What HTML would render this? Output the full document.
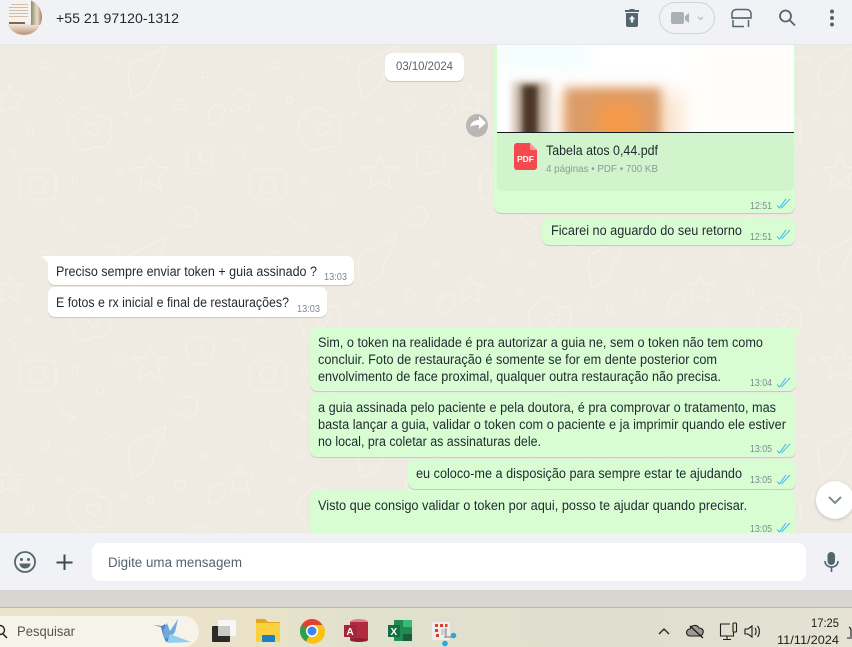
<!DOCTYPE html>
<html><head><meta charset="utf-8"><style>
*{box-sizing:border-box}
html,body{margin:0;padding:0;width:852px;height:647px;overflow:hidden;background:#efeae2;font-family:"Liberation Sans",sans-serif}
.a{position:absolute}
.b{position:absolute;border-radius:7px;box-shadow:0 1px .5px rgba(11,20,26,.16)}
.o{background:#d9fdd3}.i{background:#fff}
</style></head><body>
<svg class="a" style="left:0;top:45px" width="852" height="490">
<defs><pattern id="p" width="230" height="190" patternUnits="userSpaceOnUse">
<g fill="none" stroke="#f4f1eb" stroke-width="1.1">
<path d="M10 40l4 9 10 1-7 7 2 10-9-5-9 5 2-10-7-7 10-1z"/><circle cx="45" cy="20" r="4"/><circle cx="60" cy="55" r="3"/><circle cx="30" cy="85" r="3"/><circle cx="72" cy="30" r="2.500"/>
<path d="M75 70c8-12 22-8 24 2 8-3 16 6 10 14 6 10-6 20-14 15-8 8-22 3-22-7-8-6-6-20 2-24z"/><path d="M88 86c-5-6 2-10 5-5 4-5 10 0 5 5l-5 6z"/>
<path d="M130 20c14-8 30-14 36-20-2 10-6 20-12 28 0 10-10 22-22 24-2-10-6-20-2-32z"/><circle cx="150" cy="75" r="3"/><circle cx="180" cy="60" r="5"/><circle cx="125" cy="70" r="2.500"/><circle cx="205" cy="30" r="3"/>
<path d="M150 110l5 12 13 1-10 8 3 13-11-7-11 7 3-13-10-8 13-1z"/><circle cx="200" cy="115" r="14"/><path d="M200 105v10l6 4"/>
<rect x="20" y="125" width="36" height="30" rx="6"/><circle cx="38" cy="140" r="8"/><circle cx="75" cy="135" r="3"/><circle cx="100" cy="155" r="4"/><circle cx="120" cy="125" r="2.500"/>
<path d="M60 170l6 10 10 2-8 7M180 165c10-8 22 0 16 12-8 8-20 4-22-3M215 60c8-4 12 4 8 12l-10 8c-8-4-6-16 2-20z"/><path d="M5 105c8-2 12 6 8 12M105 15c4-6 14-6 14 2"/>
</g></pattern></defs>
<rect width="852" height="490" fill="#efeae2"/><rect width="852" height="490" fill="url(#p)"/>
</svg>

<div class="b o" style="left:494px;top:30px;width:301px;height:183px"></div>
<div class="a" style="left:497px;top:30px;width:297px;height:102px;background:#fff;overflow:hidden">
<div class="a" style="left:0;top:10px;width:90px;height:30px;background:#f2fdfc;filter:blur(10px)"></div>
<div class="a" style="left:200px;top:15px;width:97px;height:87px;background:#fffdf9;filter:blur(10px)"></div>
<div class="a" style="left:60px;top:62px;width:125px;height:60px;background:#fbe3cc;filter:blur(10px)"></div>
<div class="a" style="left:16px;top:52px;width:36px;height:70px;background:#c9b8a8;filter:blur(4px)"></div>
<div class="a" style="left:25px;top:55px;width:16px;height:70px;background:#4c3727;filter:blur(3px)"></div>
<div class="a" style="left:68px;top:58px;width:96px;height:70px;background:#dc9c68;filter:blur(5px)"></div>
<div class="a" style="left:100px;top:72px;width:44px;height:44px;background:#f69a48;filter:blur(9px)"></div>
</div>
<div class="a" style="left:497px;top:132px;width:297px;height:1px;background:#111b21"></div>
<div class="a" style="left:497px;top:133px;width:297px;height:58px;background:#d1f4cc;border-radius:0 0 6px 6px"></div>

<div class="a" style="left:0;top:0;width:852px;height:45px;background:#f0f2f5;border-bottom:1px solid #e6e7e9"></div>
<div class="a" style="left:6px;top:-1px;width:36px;height:36px;border-radius:50%;overflow:hidden;background:linear-gradient(180deg,#f5f3ef 0,#f5f3ef 66%,#dcc0aa 84%,#b98f75 100%)">
<div class="a" style="left:25px;top:0;width:11px;height:26px;background:linear-gradient(90deg,#8b8a6e,#e8dccb 55%,#a87c60)"></div>
<div class="a" style="left:3px;top:5px;width:19px;height:13px;background:repeating-linear-gradient(180deg,#d3bba6 0,#d3bba6 1px,#f5f3ef 1px,#f5f3ef 3px)"></div>
<div class="a" style="left:3px;top:23px;width:16px;height:1.500px;background:#7a675a"></div>
</div>

<div class="b o" style="left:542px;top:217px;width:253px;height:28px"></div>
<div class="b i" style="left:385px;top:53px;width:79px;height:28px"></div>
<div class="a" style="left:466px;top:114px;width:22px;height:23px;border-radius:50%;background:#b9b7b3"></div>

<div class="b i" style="left:48px;top:256px;width:306px;height:29px;border-top-left-radius:0"></div>
<div class="b i" style="left:48px;top:287px;width:279px;height:30px"></div>

<div class="b o" style="left:310px;top:328px;width:486px;height:63px;border-top-right-radius:0"></div>
<div class="b o" style="left:310px;top:394px;width:486px;height:63px"></div>
<div class="b o" style="left:408px;top:460px;width:388px;height:29px"></div>
<div class="b o" style="left:310px;top:490px;width:486px;height:60px"></div>

<div class="a" style="left:816px;top:481px;width:38px;height:38px;border-radius:50%;background:#fff;box-shadow:0 1px 3px rgba(11,20,26,.2)"></div>

<div class="a" style="left:0;top:533px;width:852px;height:57px;background:#f0f2f5"></div>
<div class="a" style="left:92px;top:543px;width:714px;height:38px;border-radius:8px;background:#fff"></div>
<div class="a" style="left:0;top:590px;width:852px;height:17px;background:#d9d6d1"></div>
<div class="a" style="left:0;top:607px;width:852px;height:1px;background:#b9b6ab"></div>
<div class="a" style="left:0;top:608px;width:852px;height:39px;background:linear-gradient(90deg,#ebe3ca 0,#e9e2c9 30%,#e0e0cf 45%,#dfdfcf 75%,#e5e2d3 100%)"></div>
<div class="a" style="left:-20px;top:616px;width:219px;height:31px;border-radius:16px;background:#f6f3ea"></div>

<svg class="a" style="left:0;top:0" width="852" height="647" font-family="Liberation Sans, sans-serif">
<defs>
<path id="tk" d="M0 7.500l2.500 2.500L9 1M4.500 10L13 1" fill="none" stroke="#53bdeb" stroke-width="1.100"/>
</defs>
<path d="M48 256h-6l6 7z" fill="#fff"/>
<path d="M796 328h6l-6 7z" fill="#d9fdd3"/>

<text x="56" y="23" font-size="14" fill="#1f2a30" textLength="123" lengthAdjust="spacingAndGlyphs">+55 21 97120-1312</text>

<g fill="#54656f">
<path d="M625 10h4l1-1h4l1 1h4v2h-14zM626 13h12v12a2 2 0 0 1-2 2h-8a2 2 0 0 1-2-2z"/>
<path d="M632 15.500l3.200 3.800h-2v3.200h-2.400v-3.200h-2z" fill="#f0f2f5"/>
</g>
<rect x="659.500" y="2.500" width="55" height="31" rx="15.500" fill="none" stroke="#d1d5d8"/>
<g fill="#a9b1b7"><rect x="671" y="12" width="13" height="12" rx="2"/><path d="M685 16l4-3v10l-4-3z"/></g>
<path d="M698 17l2.500 2.500L703 17" fill="none" stroke="#a9b1b7" stroke-width="1"/>
<g fill="none" stroke="#54656f" stroke-width="1.500">
<path d="M732 18v-4c0-3 2-4.500 4-4.500h11c2 0 4 1.500 4 4.500v4z"/><path d="M732 18h19" stroke-dasharray="2 1"/><path d="M733 20v6.500h11M748.500 20v7"/>
<circle cx="785.500" cy="16" r="5.500" stroke-width="1.800"/><path d="M789.500 20l5.500 5.500" stroke-width="1.800"/>
</g>
<g fill="#54656f"><circle cx="832" cy="11.500" r="2"/><circle cx="832" cy="18" r="2"/><circle cx="832" cy="24.500" r="2"/></g>

<text x="396" y="70" font-size="11.500" fill="#54656f" textLength="57" lengthAdjust="spacingAndGlyphs">03/10/2024</text>
<path d="M470 127c1-5 5-7 9-7v-4l7 7-7 6v-4c-4 0-7 .5-9 2z" fill="#fff"/>

<path d="M514 146a3 3 0 0 1 3-3h13l7 7v17a3 3 0 0 1-3 3h-17a3 3 0 0 1-3-3z" fill="#f5484f"/>
<path d="M530 143l7 7h-5a2 2 0 0 1-2-2z" fill="#f99"/>
<text x="517" y="162" font-size="8" font-weight="bold" fill="#fff" textLength="17" lengthAdjust="spacingAndGlyphs">PDF</text>
<text x="546" y="155" font-size="13.500" fill="#1f2a30" textLength="112" lengthAdjust="spacingAndGlyphs">Tabela atos 0,44.pdf</text>
<text x="546" y="172" font-size="10.500" fill="#8b9a9c" textLength="112" lengthAdjust="spacingAndGlyphs">4 páginas • PDF • 700 KB</text>

<g font-size="13.500" fill="#1f2a30">
<text x="551" y="235" textLength="191" lengthAdjust="spacingAndGlyphs">Ficarei no aguardo do seu retorno</text>
<text x="56" y="276" textLength="261" lengthAdjust="spacingAndGlyphs">Preciso sempre enviar token + guia assinado ?</text>
<text x="56" y="307" textLength="233" lengthAdjust="spacingAndGlyphs">E fotos e rx inicial e final de restaurações?</text>
<text x="318" y="347" textLength="445" lengthAdjust="spacingAndGlyphs">Sim, o token na realidade é pra autorizar a guia ne, sem o token não tem como</text>
<text x="318" y="364" textLength="399" lengthAdjust="spacingAndGlyphs">concluir. Foto de restauração é somente se for em dente posterior com</text>
<text x="318" y="381" textLength="403" lengthAdjust="spacingAndGlyphs">envolvimento de face proximal, qualquer outra restauração não precisa.</text>
<text x="318" y="412" textLength="458" lengthAdjust="spacingAndGlyphs">a guia assinada pelo paciente e pela doutora, é pra comprovar o tratamento, mas</text>
<text x="318" y="429" textLength="468" lengthAdjust="spacingAndGlyphs">basta lançar a guia, validar o token com o paciente e ja imprimir quando ele estiver</text>
<text x="318" y="446" textLength="223" lengthAdjust="spacingAndGlyphs">no local, pra coletar as assinaturas dele.</text>
<text x="416" y="478" textLength="326" lengthAdjust="spacingAndGlyphs">eu coloco-me a disposição para sempre estar te ajudando</text>
<text x="318" y="510" textLength="429" lengthAdjust="spacingAndGlyphs">Visto que consigo validar o token por aqui, posso te ajudar quando precisar.</text>
</g>

<g font-size="10.500" fill="#7b8a92">
<text x="750" y="209" textLength="22" lengthAdjust="spacingAndGlyphs">12:51</text>
<text x="750" y="240" textLength="22" lengthAdjust="spacingAndGlyphs">12:51</text>
<text x="324" y="280" textLength="23" lengthAdjust="spacingAndGlyphs">13:03</text>
<text x="297" y="312" textLength="23" lengthAdjust="spacingAndGlyphs">13:03</text>
<text x="750" y="386" textLength="22" lengthAdjust="spacingAndGlyphs">13:04</text>
<text x="750" y="452" textLength="22" lengthAdjust="spacingAndGlyphs">13:05</text>
<text x="750" y="483" textLength="22" lengthAdjust="spacingAndGlyphs">13:05</text>
<text x="750" y="532" textLength="22" lengthAdjust="spacingAndGlyphs">13:05</text>
</g>
<use href="#tk" x="777" y="198"/><use href="#tk" x="777" y="229"/><use href="#tk" x="777" y="377"/><use href="#tk" x="777" y="443"/><use href="#tk" x="777" y="474"/><use href="#tk" x="777" y="522"/>

<path d="M829 497l6 6 6-6" fill="none" stroke="#7c8a92" stroke-width="2"/>

<circle cx="25" cy="562" r="10" fill="none" stroke="#54656f" stroke-width="1.800"/>
<circle cx="21.500" cy="559.500" r="1.500" fill="#54656f"/><circle cx="28.500" cy="559.500" r="1.500" fill="#54656f"/>
<path d="M19.500 563.500h11c0 3-2.500 5-5.500 5s-5.500-2-5.500-5z" fill="#54656f"/>
<path d="M64.500 554.500v15.500M56.500 562.500h16" stroke="#3b4a54" stroke-width="2" fill="none"/>
<text x="108" y="567" font-size="13.500" fill="#54656f" textLength="134" lengthAdjust="spacingAndGlyphs">Digite uma mensagem</text>
<rect x="827.500" y="552" width="7.500" height="13" rx="3.700" fill="#54656f"/>
<path d="M825 561c0 8 13 8 13 0M831.500 567v5" fill="none" stroke="#54656f" stroke-width="1.600"/>

<circle cx="0" cy="630" r="4.500" fill="none" stroke="#222" stroke-width="1.400"/><path d="M3 634l4 4" stroke="#222" stroke-width="1.500"/>
<text x="17" y="636" font-size="13.500" fill="#555" textLength="58" lengthAdjust="spacingAndGlyphs">Pesquisar</text>

<path d="M153 625l8 2 2 8 3 7 5-2-4-10-2-6-3 2z" fill="#5b78b8"/>
<path d="M163 630l4-7 3 8 8-12-3 13-5 6-6 1z" fill="#6fa9d8"/>
<path d="M170 634l21 8-24 1z" fill="#8fd0ef"/>

<rect x="218" y="620" width="18" height="16" rx="1" fill="#f6f6f4"/>
<rect x="212" y="626" width="18" height="16" rx="1" fill="#2b2b2b"/>
<rect x="218" y="626" width="12" height="10" fill="#c9c9c6"/>

<path d="M256 620a1 1 0 0 1 1-1h8l3 3h12v20h-24z" fill="#e3a71b"/>
<rect x="256" y="623" width="24" height="19" fill="#fbd13f"/>
<rect x="262" y="635" width="13" height="7" rx="1" fill="#1a82c4"/>

<circle cx="312" cy="631" r="12" fill="#e34133"/>
<path d="M312 631l-6 10.400A12 12 0 0 1 301.600 625z" fill="#2ba24c"/>
<path d="M312 625h11A12 12 0 0 1 306 641.400L312 631z" fill="#fbc116"/>
<circle cx="312" cy="631" r="6" fill="#fff"/><circle cx="312" cy="631" r="4.500" fill="#3f83ee"/>

<ellipse cx="359" cy="622" rx="9" ry="3" fill="#d9808f"/>
<rect x="350" y="622" width="18" height="18" fill="#b22a40"/>
<ellipse cx="359" cy="640" rx="9" ry="2" fill="#8f1d30"/>
<rect x="344" y="625" width="13" height="12" fill="#a4263c"/>
<text x="346.500" y="635" font-size="10" font-weight="bold" fill="#fff">A</text>

<rect x="394" y="620" width="18" height="21" rx="1" fill="#1f8a52"/>
<rect x="403" y="620" width="9" height="7" fill="#3cb878"/><rect x="403" y="634" width="9" height="7" fill="#155f3a"/>
<rect x="388" y="625" width="12" height="12" fill="#107041"/>
<text x="390.500" y="635" font-size="10" font-weight="bold" fill="#fff">X</text>

<rect x="432" y="622" width="18" height="18" rx="2" fill="#eeeeed"/>
<path d="M435 624h3v3h-3zM440 624h3v3h-3zM445 624h2.500v3H445zM435 629h3v3h-3zM436 634h3v3h-3z" fill="#d9412b"/>
<path d="M441 629h5v6h-5z" fill="#cfcfcf"/>
<path d="M446 628v9M444 637h9" fill="none" stroke="#9a9a9a" stroke-width="1.400"/>
<circle cx="453.500" cy="635.500" r="2.800" fill="#2fa5e0"/><circle cx="445" cy="643.500" r="2.800" fill="#2fa5e0"/>

<g fill="none" stroke="#1c1c1c" stroke-width="1.100">
<path d="M659 634l5-5 5 5" stroke-width="1.300"/>
<path d="M690 636a3.500 3.500 0 0 1 0-7c1-4 7-5 9-1 3 0 5 2 4 5-.5 2-2 3-4 3z" fill="#555" fill-opacity=".5"/><path d="M690 626l13 12" stroke-width="1.300"/>
<path d="M730 624h-9.500v12h13v-4M727 636v3.500M723 639.500h8"/><rect x="733" y="623" width="3.500" height="9" rx="1"/>
<path d="M745 629h3l4-3v11l-4-3h-3zM755 628c1.500 2 1.500 5 0 7M757.500 626c2.500 3 2.500 8 0 11"/>
<path d="M851 637v-7a4 4 0 0 0-2-3M847 638h5"/>
</g>
<g font-size="12" fill="#1c1c1c"><text x="811" y="627" textLength="28" lengthAdjust="spacingAndGlyphs">17:25</text><text x="777" y="644" textLength="62" lengthAdjust="spacingAndGlyphs">11/11/2024</text></g>
</svg>
</body></html>
